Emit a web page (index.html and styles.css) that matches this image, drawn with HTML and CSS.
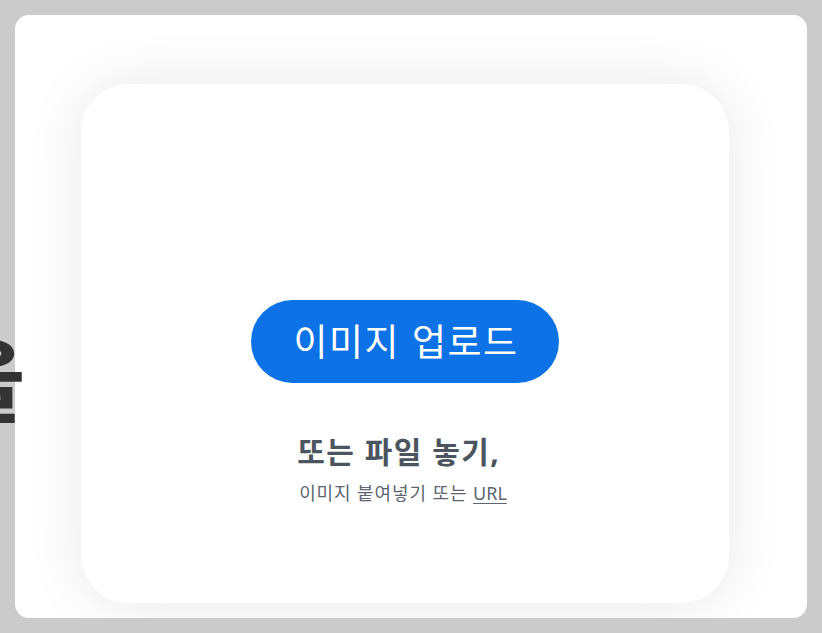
FILE: index.html
```html
<!DOCTYPE html>
<html lang="ko">
<head>
<meta charset="utf-8">
<link rel="stylesheet" href="styles.css">
</head>
<body>
<div class="behind">을</div>
<div class="outer">
  <div class="dropzone">
    <button class="upload">이미지 업로드</button>
    <div class="drop-text">
      <div class="drop-title">또는 파일 놓기,</div>
      <div class="drop-sub">이미지 붙여넣기 또는 <span class="url">URL</span></div>
    </div>
  </div>
</div>
</body>
</html>
```

FILE: styles.css
```css
html, body {
  margin: 0;
  padding: 0;
}
body {
  background: #cbcbcb;
  padding: 15px;
  width: 822px;
  height: 633px;
  box-sizing: border-box;
  overflow: hidden;
  font-family: "Noto Sans", "Noto Sans CJK KR", sans-serif;
  position: relative;
}
.behind {
  position: absolute;
  left: -59px;
  top: 329px;
  font-size: 92px;
  line-height: 1;
  font-weight: 700;
  color: #333333;
  font-family: "Noto Sans CJK KR", sans-serif;
  z-index: 2;
}
.outer {
  background: #ffffff;
  border-radius: 14px;
  height: 603px;
  box-sizing: border-box;
  padding: 69px 78px 15px 66px;
  display: flex;
  overflow: hidden;
}
.dropzone {
  flex: 1;
  background: #ffffff;
  border-radius: 48px;
  box-shadow: 0 0 60px rgba(0, 0, 0, 0.09);
  display: flex;
  flex-direction: column;
  align-items: center;
  padding-top: 216px;
  box-sizing: border-box;
}
.upload {
  width: 308px;
  height: 83px;
  border: none;
  border-radius: 42px;
  background: #0c72e5;
  color: #ffffff;
  font-family: "Noto Sans CJK KR", sans-serif;
  font-size: 37px;
  font-weight: 400;
  letter-spacing: 1.5px;
  padding: 0 0 4px 2px;
}
.drop-text {
  margin-top: 51px;
  text-align: left;
  padding-right: 4px;
}
.drop-title {
  font-size: 30px;
  font-weight: 700;
  color: #4b5560;
  line-height: 1.2;
  letter-spacing: 1.5px;
  margin-left: -2px;
}
.drop-sub {
  margin-top: 12px;
  font-size: 18px;
  color: #5c6570;
  line-height: 1.3;
  letter-spacing: 0.9px;
}
.url {
  text-decoration: underline;
  text-underline-offset: 3px;
  letter-spacing: 0;
}
```
